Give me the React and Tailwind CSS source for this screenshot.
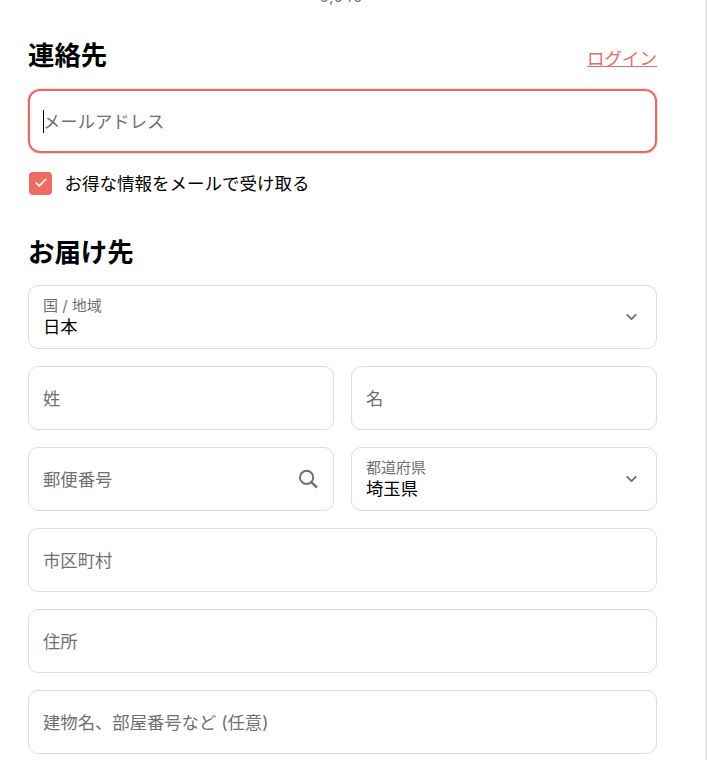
import { ChevronDown, Check } from 'lucide-react';

function Field({ label, value, placeholder, icon }) {
  return (
    <div className="relative flex h-[63.5px] flex-col justify-center rounded-[10px] border border-[#dedede] bg-white px-[14px]">
      {label ? (
        <>
          <span className="text-[15px] leading-[20px] text-[#707070]">{label}</span>
          <span className="text-[17.33px] leading-[21px] text-black">{value}</span>
        </>
      ) : (
        <span className="pt-[2px] text-[17.33px] leading-[24px] text-[#707070]">{placeholder}</span>
      )}
      {icon === 'chevron' && (
        <ChevronDown className="absolute right-[16px] top-1/2 h-[17px] w-[17px] -translate-y-1/2 text-[#707070]" strokeWidth={2.6} />
      )}
      {icon === 'search' && (
        <svg className="absolute right-[15px] top-1/2 h-[20px] w-[20px] -translate-y-1/2 text-[#707070]" viewBox="0 0 20 20" fill="none" stroke="currentColor">
          <circle cx="8.6" cy="8.4" r="6.6" strokeWidth="2" />
          <path d="M13.6 13.4 19 18.6" strokeWidth="2.6" />
        </svg>
      )}
    </div>
  );
}

export default function App() {
  return (
    <div className="h-[760px] w-[707px] overflow-hidden bg-white font-['Inter','Noto_Sans_CJK_JP',sans-serif]">
      <div className="h-full w-[707px] border-r-2 border-[#e6e6e6] pl-[28px] pr-[48px]">
        <div className="relative h-0">
          <span className="absolute left-[292px] top-[-12px] text-[14px] leading-[18px] tracking-[1px] text-[#707070]">5,545</span>
        </div>

        {/* contact */}
        <div className="flex h-[89px] items-end justify-between pb-[16px]">
          <h2 className="text-[26.4px] font-bold leading-[36px] text-black">連絡先</h2>
          <a className="pb-[2px] text-[17.5px] leading-[24px] text-[#e96a63] underline">ログイン</a>
        </div>
        <div className="relative flex h-[64px] items-center rounded-[12px] border-2 border-[#e96a63] pl-[13px] shadow-[0_0_0_1px_#fbdcda]">
          <span className="mr-[-1px] h-[23px] w-px bg-black" />
          <span className="pt-[2px] text-[17.33px] leading-[24px] text-[#707070]">メールアドレス</span>
        </div>
        <label className="mt-[18px] flex h-[24px] items-center">
          <span className="ml-[1px] flex h-[23px] w-[23px] items-center justify-center rounded-[4px] bg-[#ee6c64]">
            <Check className="h-[14px] w-[14px] text-white" strokeWidth={3} />
          </span>
          <span className="ml-[12.5px] pt-[2px] text-[17.5px] leading-[24px] text-black">お得な情報をメールで受け取る</span>
        </label>

        {/* shipping */}
        <h2 className="mb-[15px] mt-[39px] text-[26.4px] font-bold leading-[36px] text-black">お届け先</h2>
        <div className="flex flex-col gap-[17.5px]">
          <Field label="国 / 地域" value="日本" icon="chevron" />
          <div className="grid grid-cols-2 gap-[17px]">
            <Field placeholder="姓" />
            <Field placeholder="名" />
          </div>
          <div className="grid grid-cols-2 gap-[17px]">
            <Field placeholder="郵便番号" icon="search" />
            <Field label="都道府県" value="埼玉県" icon="chevron" />
          </div>
          <Field placeholder="市区町村" />
          <Field placeholder="住所" />
          <Field placeholder="建物名、部屋番号など (任意)" />
        </div>
      </div>
    </div>
  );
}
